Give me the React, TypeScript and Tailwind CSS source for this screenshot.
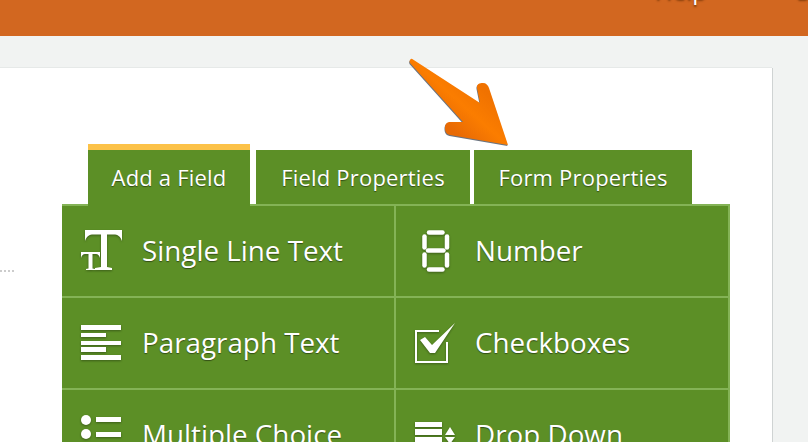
const font = "font-['Open_Sans','Noto_Sans',sans-serif]";
const iconShadow = "drop-shadow-[0_1px_1px_rgba(0,0,0,0.35)]";

function TextIcon() {
  return (
    <svg width="44" height="44" viewBox="0 0 44 44" fill="#fff" className={iconShadow}>
      <path d="M5 1H42V12C41 9 39 6 35 5.500H27V38L32 39V41H15V39L21 38V5.500H12C8 6 6 9 5 12Z" />
      <path d="M1 23H20V29C19.500 27 18 25 16 25H12.500V39.500L15 40V41H6V40L8.500 39.500V25H5C3 25 1.500 27 1 29Z" />
    </svg>
  );
}

function NumberIcon() {
  return (
    <svg width="30" height="42" viewBox="0 0 30 42" fill="none" stroke="#fff" strokeWidth="4.5" strokeLinecap="round" className={iconShadow}>
      <path d="M8 2.500H21.500" />
      <path d="M3.500 6.500V17.500" />
      <path d="M26 6.500V17.500" />
      <path d="M7 20.500H22.500" />
      <path d="M3.500 24.500V35.500" />
      <path d="M26 24.500V35.500" />
      <path d="M8 39.500H21.500" />
    </svg>
  );
}

function ParagraphIcon() {
  return (
    <svg width="42" height="36" viewBox="0 0 42 36" fill="#fff" className={iconShadow}>
      <rect x="0" y="0" width="40" height="5" />
      <rect x="0" y="8" width="25" height="4" />
      <rect x="0" y="16" width="40" height="4" />
      <rect x="0" y="22" width="25" height="5" />
      <rect x="0" y="30" width="40" height="5" />
    </svg>
  );
}

function CheckIcon() {
  return (
    <svg width="42" height="42" viewBox="0 0 42 42" fill="none" className={iconShadow}>
      <path d="M24 9H1V40H32V20" stroke="#fff" strokeWidth="2" />
      <path d="M5 18L10 15L17 23L40 1L20 31H15Z" fill="#fff" />
    </svg>
  );
}

function ChoiceIcon() {
  return (
    <svg width="42" height="42" viewBox="0 0 42 42" fill="#fff" className={iconShadow}>
      <circle cx="5" cy="6" r="5" />
      <circle cx="5" cy="20" r="5" />
      <circle cx="5" cy="34" r="5" />
      <rect x="15" y="3" width="25" height="5" />
      <rect x="15" y="18" width="25" height="5" />
      <rect x="15" y="32" width="25" height="5" />
    </svg>
  );
}

function DropIcon() {
  return (
    <svg width="42" height="42" viewBox="0 0 42 42" fill="#fff" className={iconShadow}>
      <rect x="0" y="8" width="27" height="5" />
      <rect x="0" y="15" width="27" height="6" />
      <rect x="0" y="23" width="27" height="6" />
      <path d="M35 13L40 21H30Z" />
      <path d="M30 23H40L35 30Z" />
    </svg>
  );
}

const arrowPath =
  "M2 3C3 1.500 4 1.500 5 2.500L72 46L69 31C68.500 27 71.500 26 75 26C78 26 80 28 81 31L100 88L42 78C38 77 37 74 37 71C37 67 39 65 42 65L55 65L2 6C1.500 5 1.500 4 2 3Z";

function Arrow() {
  return (
    <svg width="104" height="100" viewBox="0 0 104 100" className="absolute top-[-11px] left-[408px]">
      <defs>
        <linearGradient id="arrowFill" x1="52" y1="80" x2="86" y2="42" gradientUnits="userSpaceOnUse">
          <stop offset="0" stopColor="#e86a05" />
          <stop offset="0.5" stopColor="#fb7d00" />
          <stop offset="1" stopColor="#f07200" />
        </linearGradient>
      </defs>
      <path d={arrowPath} fill="#6b7480" transform="translate(-0.5 1)" />
      <path d={arrowPath} fill="url(#arrowFill)" />
    </svg>
  );
}

const fields = [
  { label: "Single Line Text", icon: <TextIcon /> },
  { label: "Number", icon: <NumberIcon /> },
  { label: "Paragraph Text", icon: <ParagraphIcon /> },
  { label: "Checkboxes", icon: <CheckIcon /> },
  { label: "Multiple Choice", icon: <ChoiceIcon /> },
  { label: "Drop Down", icon: <DropIcon /> },
];

export default function App() {
  return (
    <div className={`relative flex h-[442px] w-[808px] flex-col overflow-hidden bg-[#f1f3f2] ${font}`}>
      <header className="h-9 shrink-0 overflow-hidden bg-[#d26720]">
        <div className="mt-[-26px] flex h-8 gap-[90px] pl-[655px] text-[24px] leading-8 whitespace-nowrap text-white [text-shadow:0_2px_2px_rgba(90,40,0,0.7)]">
          <span>Help</span>
          <span>Sign Out</span>
        </div>
      </header>

      <div className="flex-1 pt-8 pr-9">
        <div className="relative h-full bg-white pt-[76px] pl-[62px] shadow-[1px_0_0_#cfd3d3,0_-1px_0_#e6e9e8]">
          <div className="absolute top-[202px] left-0 h-[2px] w-[14px] bg-[repeating-linear-gradient(90deg,#cccccc_0_2px,transparent_2px_4px)]" />

          <div className="flex items-start pl-[26px] text-[22px] tracking-[0.2px] text-white [text-shadow:0_1px_1px_rgba(0,0,0,0.45)]">
            <div className="relative z-10 mb-[-2px] flex h-[62px] w-[162px] items-center justify-center border-t-[6px] border-[#fcc248] bg-[#5c8f26] pb-[2px]">
              Add a Field
            </div>
            <div className="mt-[6px] ml-[6px] flex h-[54px] w-[214px] items-center justify-center bg-[#5c8f26]">
              Field Properties
            </div>
            <div className="mt-[6px] ml-1 flex h-[54px] w-[218px] items-center justify-center bg-[#5c8f26]">
              Form Properties
            </div>
          </div>

          <div className="grid w-[668px] grid-cols-[334px_1fr] border-t-2 border-r-2 border-[#84b356] bg-[#5c8f26]">
            {fields.map((f, i) => (
              <div
                key={f.label}
                className={`flex h-[92px] items-center border-b-2 border-[#84b356] text-[27.8px] text-white [text-shadow:0_1px_1px_rgba(0,0,0,0.45)] ${i % 2 === 0 ? "border-r-2" : ""}`}
              >
                <div className={`flex shrink-0 justify-center ${i % 2 === 0 ? "w-20" : "w-[79px]"}`}>{f.icon}</div>
                <span>{f.label}</span>
              </div>
            ))}
          </div>

          <Arrow />
        </div>
      </div>
    </div>
  );
}
